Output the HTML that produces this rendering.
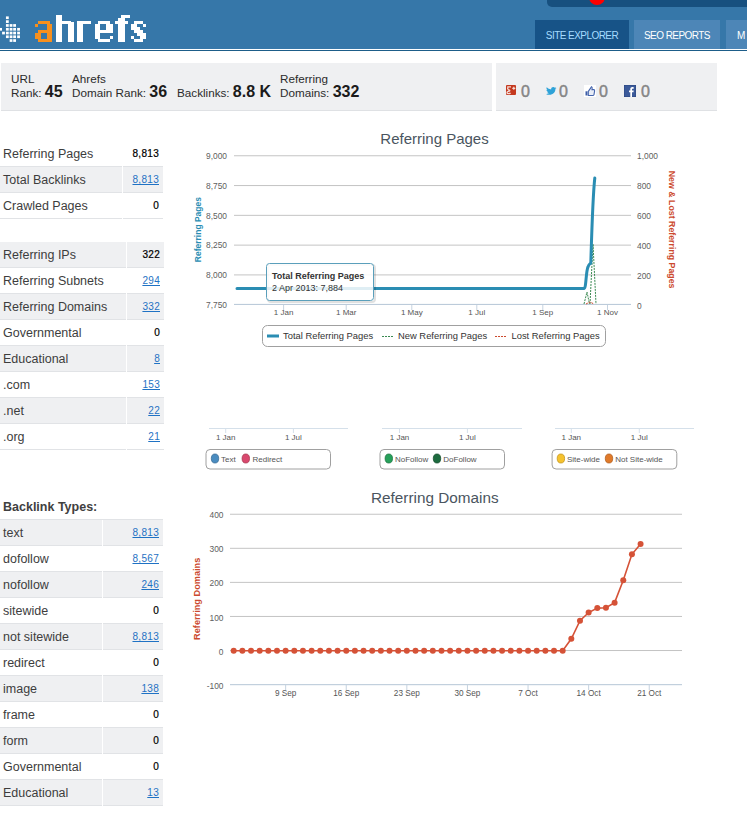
<!DOCTYPE html>
<html><head><meta charset="utf-8"><style>
html,body{margin:0;padding:0;background:#fff;width:747px;height:815px;overflow:hidden;position:relative;font-family:"Liberation Sans",sans-serif;}
.a{position:absolute;white-space:nowrap;}
#hdr{position:absolute;left:0;top:0;width:747px;height:49px;background:#3677a9;}
#hl1{position:absolute;left:0;top:49px;width:747px;height:1px;background:#fff;}
#hl2{position:absolute;left:0;top:50px;width:747px;height:1px;background:#1d5d89;}
.tab{position:absolute;top:20px;height:29px;font-size:10px;line-height:31px;letter-spacing:-0.55px;color:#fff;text-align:center;}
.stat{position:absolute;top:63px;height:47px;background:#eff0f2;border-bottom:1px solid #dfe1e4;}
.lbl{font-size:11.7px;color:#2b2b2b;line-height:13.6px;}
.num{font-size:16px;font-weight:bold;color:#1b1b1b;}
.row{position:absolute;left:0;height:25px;border-bottom:1px solid #e1e3e6;}
.g{background:#eff0f2;}
.rl{position:absolute;left:3px;top:1px;line-height:25px;font-size:12.5px;color:#3d3d3d;white-space:nowrap;}
.rv{position:absolute;right:4px;top:0px;line-height:25px;font-size:10px;letter-spacing:0.3px;color:#000;white-space:nowrap;}
.rv a{color:#1f72c4;text-decoration:underline;font-weight:normal;}
.rv b{font-weight:normal;-webkit-text-stroke:0.22px #000;}
.sep{position:absolute;top:0;width:1px;height:26px;background:#fff;}
</style></head><body>

<div id="hdr"></div><div id="hl1"></div><div id="hl2"></div>
<div class="a" style="left:547px;top:-5px;width:210px;height:12px;background:#17507f;border-radius:5px;"></div>
<div class="a" style="left:588.7px;top:-11.6px;width:16.6px;height:16.6px;background:#ff0000;border-radius:50%;"></div>
<div class="tab" style="left:535px;width:94px;background:#175387;color:#a6dcff;">SITE EXPLORER</div>
<div class="tab" style="left:634px;width:86px;background:#4d86b7;">SEO REPORTS</div>
<div class="tab" style="left:726px;width:40px;background:#4d86b7;text-align:left;"><span style="margin-left:11px">M</span></div>
<svg class="a" style="left:0;top:0" width="160" height="49"><rect x="5.95" y="16.4" width="2.8" height="2.7" fill="#fff"/><rect x="5.95" y="20.25" width="2.8" height="2.7" fill="#fff"/><rect x="5.95" y="24.1" width="2.8" height="2.7" fill="#fff"/><rect x="9.65" y="24.1" width="2.8" height="2.7" fill="#fff"/><rect x="13.2" y="24.1" width="2.8" height="2.7" fill="#fff"/><rect x="-0.8" y="27.95" width="2.8" height="2.7" fill="#fff"/><rect x="5.95" y="27.95" width="2.8" height="2.7" fill="#fff"/><rect x="9.65" y="27.95" width="2.8" height="2.7" fill="#fff"/><rect x="13.2" y="27.95" width="2.8" height="2.7" fill="#fff"/><rect x="17.15" y="27.95" width="2.8" height="2.7" fill="#fff"/><rect x="2.1" y="31.7" width="2.8" height="2.7" fill="#fff"/><rect x="5.95" y="31.7" width="2.8" height="2.7" fill="#fff"/><rect x="9.65" y="31.7" width="2.8" height="2.7" fill="#fff"/><rect x="13.2" y="31.7" width="2.8" height="2.7" fill="#fff"/><rect x="17.15" y="31.7" width="2.8" height="2.7" fill="#fff"/><rect x="5.95" y="35.4" width="2.8" height="2.7" fill="#fff"/><rect x="9.65" y="35.4" width="2.8" height="2.7" fill="#fff"/><rect x="13.2" y="35.4" width="2.8" height="2.7" fill="#fff"/><rect x="17.15" y="35.4" width="2.8" height="2.7" fill="#fff"/><rect x="9.65" y="39.2" width="2.8" height="2.7" fill="#fff"/><rect x="13.2" y="39.2" width="2.8" height="2.7" fill="#fff"/></svg>
<svg class="a" style="left:0;top:0" width="160" height="49" shape-rendering="crispEdges"><rect x="38.4" y="20.92" width="11.5" height="2.96" fill="#f7901e"/><rect x="35.0" y="23.88" width="3.4" height="2.96" fill="#f7901e"/><rect x="46.7" y="23.88" width="5.7" height="17.76" fill="#f7901e"/><rect x="38.4" y="29.8" width="8.3" height="2.96" fill="#f7901e"/><rect x="35.0" y="32.76" width="5.7" height="5.92" fill="#f7901e"/><rect x="38.4" y="38.68" width="8.3" height="2.96" fill="#f7901e"/><rect x="55.7" y="15.0" width="6.2" height="26.64" fill="#fff"/><rect x="61.9" y="20.92" width="8.6" height="2.96" fill="#fff"/><rect x="67.8" y="23.88" width="5.9" height="17.759999999999998" fill="#fff"/><rect x="70.5" y="22.42" width="3.2" height="1.5" fill="#fff"/><rect x="76.6" y="20.92" width="6.2" height="20.72" fill="#fff"/><rect x="82.8" y="20.92" width="8.3" height="2.96" fill="#fff"/><rect x="97.9" y="20.92" width="11.8" height="2.96" fill="#fff"/><rect x="94.6" y="23.88" width="5.6" height="14.8" fill="#fff"/><rect x="106.2" y="23.88" width="6.3" height="5.92" fill="#fff"/><rect x="100.2" y="29.8" width="12.3" height="2.96" fill="#fff"/><rect x="109.5" y="35.72" width="3.0" height="2.96" fill="#fff"/><rect x="97.9" y="38.68" width="11.8" height="2.96" fill="#fff"/><rect x="121.4" y="15.0" width="8.8" height="2.96" fill="#fff"/><rect x="118.2" y="17.96" width="6.4" height="23.68" fill="#fff"/><rect x="115.0" y="20.92" width="13.0" height="2.96" fill="#fff"/><rect x="134.0" y="20.92" width="9.0" height="2.96" fill="#fff"/><rect x="131.0" y="23.88" width="6.2" height="2.96" fill="#fff"/><rect x="143.0" y="23.88" width="3.0" height="2.96" fill="#fff"/><rect x="131.0" y="26.84" width="8.8" height="2.96" fill="#fff"/><rect x="134.0" y="29.8" width="9.0" height="2.96" fill="#fff"/><rect x="137.2" y="32.76" width="8.8" height="2.96" fill="#fff"/><rect x="131.0" y="35.72" width="3.0" height="2.96" fill="#fff"/><rect x="139.8" y="35.72" width="6.2" height="2.96" fill="#fff"/><rect x="134.0" y="38.68" width="9.0" height="2.96" fill="#fff"/></svg>
<div class="stat" style="left:1px;width:491px;"></div>
<div class="stat" style="left:496px;width:221px;"></div>
<div class="a lbl" style="left:11px;top:71.6px;">URL<br>Rank: <span class="num" style="position:relative;top:0px">45</span></div>
<div class="a lbl" style="left:72px;top:71.6px;">Ahrefs<br>Domain Rank: <span class="num" style="position:relative;top:0px">36</span></div>
<div class="a lbl" style="left:177px;top:85.2px;">Backlinks: <span class="num" style="position:relative;top:0px">8.8 K</span></div>
<div class="a lbl" style="left:280px;top:71.6px;">Referring<br>Domains: <span class="num" style="position:relative;top:0px">332</span></div>
<svg class="a" style="left:506px;top:85px" width="10" height="10"><rect width="10" height="10" rx="1" fill="#c4391f"/><path d="M1.2 1.8 H5 M2.6 1.8 Q0.8 3.2 2.4 4.6 Q4.2 5.2 3.6 6 Q0.6 6.6 1.2 8.2 Q2.6 9.2 4.6 8.2" fill="none" stroke="#f4dcd6" stroke-width="1.3"/><path d="M6.3 3.3 H9.3 M7.8 1.8 V4.8" stroke="#f4dcd6" stroke-width="1.2"/></svg>
<div class="a" style="left:521px;top:83px;font-size:16px;color:#858585;-webkit-text-stroke:0.45px #858585;">0</div>
<svg class="a" style="left:546px;top:87.3px" width="10.5" height="8" viewBox="0 0 24 20" preserveAspectRatio="none"><path d="M24 2.4c-.9.4-1.8.6-2.8.8 1-.6 1.8-1.6 2.2-2.7-1 .6-2 1-3.1 1.2C19.3.7 18 0 16.6 0c-2.7 0-4.9 2.2-4.9 4.9 0 .4 0 .8.1 1.1C7.7 5.8 4.1 3.9 1.7.9c-.4.7-.7 1.6-.7 2.5 0 1.7.9 3.2 2.2 4.1-.8 0-1.6-.2-2.2-.6v.1c0 2.4 1.7 4.4 3.9 4.8-.4.1-.8.2-1.3.2-.3 0-.6 0-.9-.1.6 2 2.4 3.4 4.6 3.4-1.7 1.3-3.8 2.1-6.1 2.1-.4 0-.8 0-1.2-.1 2.2 1.4 4.8 2.2 7.5 2.2 9.1 0 14-7.5 14-14v-.6c1-.7 1.8-1.6 2.5-2.5z" fill="#2ea2d8"/></svg>
<div class="a" style="left:559px;top:83px;font-size:16px;color:#858585;-webkit-text-stroke:0.45px #858585;">0</div>
<svg class="a" style="left:584px;top:85px" width="12" height="12"><rect width="12" height="12" fill="#fff"/><path d="M1.5 6.3h2v4.2h-2z" fill="#3d5ea8"/><path d="M4.3 6.3 L6.6 3.2 Q7 2 7.6 1.6 Q8.6 2.2 8 4.6 H9.9 Q10.8 4.9 10.6 5.9 L10 9.6 Q9.7 10.5 8.8 10.5 H4.3z" fill="#e8edf7" stroke="#4565ad" stroke-width="1.1"/></svg>
<div class="a" style="left:599px;top:83px;font-size:16px;color:#858585;-webkit-text-stroke:0.45px #858585;">0</div>
<svg class="a" style="left:624px;top:85px" width="12" height="12"><rect width="12" height="12" fill="#3b5a9a"/><rect x="0" y="0" width="12" height="12" fill="none" stroke="#2c4680" stroke-width="1"/><path d="M6.3 12V7.2H5v-1.8h1.3V4.3c0-1.4.8-2.2 2.1-2.2.6 0 1.1 0 1.3.1v1.5h-.9c-.7 0-.8.3-.8.8v.9h1.7l-.2 1.8H8v4.8z" fill="#fff"/></svg>
<div class="a" style="left:641px;top:83px;font-size:16px;color:#858585;-webkit-text-stroke:0.45px #858585;">0</div>
<div class="row" style="top:141px;width:163px;"><span class="rl">Referring Pages</span><span class="rv"><b>8,813</b></span><div class="sep" style="left:122px"></div></div>
<div class="row g" style="top:167px;width:163px;"><span class="rl">Total Backlinks</span><span class="rv"><a>8,813</a></span><div class="sep" style="left:122px"></div></div>
<div class="row" style="top:193px;width:163px;"><span class="rl">Crawled Pages</span><span class="rv"><b>0</b></span><div class="sep" style="left:122px"></div></div>
<div class="row g" style="top:242px;width:164px;"><span class="rl">Referring IPs</span><span class="rv"><b>322</b></span><div class="sep" style="left:126px"></div></div>
<div class="row" style="top:268px;width:164px;"><span class="rl">Referring Subnets</span><span class="rv"><a>294</a></span><div class="sep" style="left:126px"></div></div>
<div class="row g" style="top:294px;width:164px;"><span class="rl">Referring Domains</span><span class="rv"><a>332</a></span><div class="sep" style="left:126px"></div></div>
<div class="row" style="top:320px;width:164px;"><span class="rl">Governmental</span><span class="rv"><b>0</b></span><div class="sep" style="left:126px"></div></div>
<div class="row g" style="top:346px;width:164px;"><span class="rl">Educational</span><span class="rv"><a>8</a></span><div class="sep" style="left:126px"></div></div>
<div class="row" style="top:372px;width:164px;"><span class="rl">.com</span><span class="rv"><a>153</a></span><div class="sep" style="left:126px"></div></div>
<div class="row g" style="top:398px;width:164px;"><span class="rl">.net</span><span class="rv"><a>22</a></span><div class="sep" style="left:126px"></div></div>
<div class="row" style="top:424px;width:164px;"><span class="rl">.org</span><span class="rv"><a>21</a></span><div class="sep" style="left:126px"></div></div>
<div class="a" style="left:3px;top:500px;font-size:12.5px;font-weight:bold;color:#404040;">Backlink Types:</div>
<div class="a" style="left:0;top:519px;width:163px;height:1px;background:#e1e3e6"></div>
<div class="row g" style="top:520px;width:163px;"><span class="rl">text</span><span class="rv"><a>8,813</a></span><div class="sep" style="left:102px"></div></div>
<div class="row" style="top:546px;width:163px;"><span class="rl">dofollow</span><span class="rv"><a>8,567</a></span><div class="sep" style="left:102px"></div></div>
<div class="row g" style="top:572px;width:163px;"><span class="rl">nofollow</span><span class="rv"><a>246</a></span><div class="sep" style="left:102px"></div></div>
<div class="row" style="top:598px;width:163px;"><span class="rl">sitewide</span><span class="rv"><b>0</b></span><div class="sep" style="left:102px"></div></div>
<div class="row g" style="top:624px;width:163px;"><span class="rl">not sitewide</span><span class="rv"><a>8,813</a></span><div class="sep" style="left:102px"></div></div>
<div class="row" style="top:650px;width:163px;"><span class="rl">redirect</span><span class="rv"><b>0</b></span><div class="sep" style="left:102px"></div></div>
<div class="row g" style="top:676px;width:163px;"><span class="rl">image</span><span class="rv"><a>138</a></span><div class="sep" style="left:102px"></div></div>
<div class="row" style="top:702px;width:163px;"><span class="rl">frame</span><span class="rv"><b>0</b></span><div class="sep" style="left:102px"></div></div>
<div class="row g" style="top:728px;width:163px;"><span class="rl">form</span><span class="rv"><b>0</b></span><div class="sep" style="left:102px"></div></div>
<div class="row" style="top:754px;width:163px;"><span class="rl">Governmental</span><span class="rv"><b>0</b></span><div class="sep" style="left:102px"></div></div>
<div class="row g" style="top:780px;width:163px;"><span class="rl">Educational</span><span class="rv"><a>13</a></span><div class="sep" style="left:102px"></div></div>
<svg class="a" style="left:0;top:0" width="747" height="815" font-family="Liberation Sans"><text x="434.5" y="144" font-size="15" fill="#4a5560" text-anchor="middle">Referring Pages</text><rect x="234" y="155.26" width="397" height="1" fill="#c4c4c4"/><text x="227" y="158.90" font-size="8.4" fill="#606060" text-anchor="end">9,000</text><text x="637" y="158.90" font-size="8.4" fill="#606060">1,000</text><rect x="234" y="185.05" width="397" height="1" fill="#c4c4c4"/><text x="227" y="188.75" font-size="8.4" fill="#606060" text-anchor="end">8,750</text><text x="637" y="188.80" font-size="8.4" fill="#606060">800</text><rect x="234" y="214.84" width="397" height="1" fill="#c4c4c4"/><text x="227" y="218.60" font-size="8.4" fill="#606060" text-anchor="end">8,500</text><text x="637" y="218.70" font-size="8.4" fill="#606060">600</text><rect x="234" y="244.63" width="397" height="1" fill="#c4c4c4"/><text x="227" y="248.45" font-size="8.4" fill="#606060" text-anchor="end">8,250</text><text x="637" y="248.60" font-size="8.4" fill="#606060">400</text><rect x="234" y="274.41" width="397" height="1" fill="#c4c4c4"/><text x="227" y="278.30" font-size="8.4" fill="#606060" text-anchor="end">8,000</text><text x="637" y="278.50" font-size="8.4" fill="#606060">200</text><rect x="234" y="303.9" width="397" height="1.1" fill="#bccbda"/><text x="227" y="308.2" font-size="8.4" fill="#606060" text-anchor="end">7,750</text><text x="637" y="308.6" font-size="8.4" fill="#606060">0</text><rect x="283.1" y="305" width="1" height="5" fill="#c6d3e0"/><text x="283.6" y="315" font-size="8" fill="#555" text-anchor="middle">1 Jan</text><rect x="345.7" y="305" width="1" height="5" fill="#c6d3e0"/><text x="346.2" y="315" font-size="8" fill="#555" text-anchor="middle">1 Mar</text><rect x="411.3" y="305" width="1" height="5" fill="#c6d3e0"/><text x="411.8" y="315" font-size="8" fill="#555" text-anchor="middle">1 May</text><rect x="476.3" y="305" width="1" height="5" fill="#c6d3e0"/><text x="476.8" y="315" font-size="8" fill="#555" text-anchor="middle">1 Jul</text><rect x="542.3" y="305" width="1" height="5" fill="#c6d3e0"/><text x="542.8" y="315" font-size="8" fill="#555" text-anchor="middle">1 Sep</text><rect x="607.0" y="305" width="1" height="5" fill="#c6d3e0"/><text x="607.5" y="315" font-size="8" fill="#555" text-anchor="middle">1 Nov</text><text transform="translate(201,229.6) rotate(-90)" font-size="8.5" font-weight="bold" fill="#2a8db3" text-anchor="middle">Referring Pages</text><text transform="translate(668.7,229.6) rotate(90)" font-size="8.8" font-weight="bold" fill="#cc4a2e" text-anchor="middle">New &amp; Lost Referring Pages</text><path d="M584 304 L587 292 L589.5 304 M590 304 L593 244 L596 304" fill="none" stroke="#3a8a52" stroke-width="1" stroke-dasharray="2,1"/><path d="M586 304 L590 302 L594 304" fill="none" stroke="#cc4a2e" stroke-width="1" stroke-dasharray="2,1"/><path d="M237 288.5 L584.3 288.5 C586 288.5 586 271 588 267 C589 264 590 264 590.8 263 C591.5 240 592.8 195 594.8 178" fill="none" stroke="#2a8db3" stroke-width="3" stroke-linejoin="round" stroke-linecap="round"/><rect x="268" y="265" width="107" height="37" rx="3" fill="none" stroke="#000" stroke-opacity="0.12" stroke-width="2"/><rect x="266.5" y="263.5" width="107" height="37" rx="3" fill="#fff" fill-opacity="0.85" stroke="#5a9fbb" stroke-width="1"/><text x="272" y="279" font-size="9" font-weight="bold" fill="#333">Total Referring Pages</text><text x="272" y="291" font-size="9" fill="#333">2 Apr 2013: 7,884</text><rect x="262.5" y="325.5" width="343" height="21" rx="5" fill="#fff" stroke="#a0a0a0" stroke-width="1"/><rect x="267" y="334.5" width="12" height="3" fill="#2a8db3"/><text x="283" y="339" font-size="9.4" fill="#333">Total Referring Pages</text><path d="M382 336.5 H394" stroke="#3a8a52" stroke-width="1" stroke-dasharray="2,1"/><text x="398" y="339" font-size="9.4" fill="#333">New Referring Pages</text><path d="M495 336.5 H507" stroke="#cc4a2e" stroke-width="1" stroke-dasharray="2,1"/><text x="511.5" y="339" font-size="9.4" fill="#333">Lost Referring Pages</text><rect x="209" y="428" width="139" height="1" fill="#d5e0ea"/><rect x="225.2" y="429" width="1" height="4" fill="#d5e0ea"/><text x="225.7" y="440" font-size="8" fill="#555" text-anchor="middle">1 Jan</text><rect x="292.9" y="429" width="1" height="4" fill="#d5e0ea"/><text x="293.4" y="440" font-size="8" fill="#555" text-anchor="middle">1 Jul</text><rect x="206.0" y="449.5" width="124.5" height="19.5" rx="4" fill="#fff" stroke="#a0a0a0" stroke-width="1"/><ellipse cx="215" cy="458.5" rx="3.7" ry="4.5" fill="#4a8cc0" stroke="#3a6c95" stroke-width="0.8"/><text x="221" y="462" font-size="8" fill="#555">Text</text><ellipse cx="245.8" cy="458.5" rx="3.7" ry="4.5" fill="#d9486e" stroke="#a8364f" stroke-width="0.8"/><text x="252.5" y="462" font-size="8" fill="#555">Redirect</text><rect x="382" y="428" width="140" height="1" fill="#d5e0ea"/><rect x="399.0" y="429" width="1" height="4" fill="#d5e0ea"/><text x="399.5" y="440" font-size="8" fill="#555" text-anchor="middle">1 Jan</text><rect x="466.9" y="429" width="1" height="4" fill="#d5e0ea"/><text x="467.4" y="440" font-size="8" fill="#555" text-anchor="middle">1 Jul</text><rect x="380.0" y="449.5" width="124.5" height="19.5" rx="4" fill="#fff" stroke="#a0a0a0" stroke-width="1"/><ellipse cx="388.8" cy="458.5" rx="3.7" ry="4.5" fill="#26a05a" stroke="#1c7541" stroke-width="0.8"/><text x="395" y="462" font-size="8" fill="#555">NoFollow</text><ellipse cx="437" cy="458.5" rx="3.7" ry="4.5" fill="#1d6b3f" stroke="#144d2c" stroke-width="0.8"/><text x="443.3" y="462" font-size="8" fill="#555">DoFollow</text><rect x="555" y="428" width="139" height="1" fill="#d5e0ea"/><rect x="570.8" y="429" width="1" height="4" fill="#d5e0ea"/><text x="571.3" y="440" font-size="8" fill="#555" text-anchor="middle">1 Jan</text><rect x="638.8" y="429" width="1" height="4" fill="#d5e0ea"/><text x="639.3" y="440" font-size="8" fill="#555" text-anchor="middle">1 Jul</text><rect x="552.1" y="449.5" width="124.69999999999993" height="19.5" rx="4" fill="#fff" stroke="#a0a0a0" stroke-width="1"/><ellipse cx="560.9" cy="458.5" rx="3.7" ry="4.5" fill="#f5c22e" stroke="#c4961d" stroke-width="0.8"/><text x="567" y="462" font-size="8" fill="#555">Site-wide</text><ellipse cx="609" cy="458.5" rx="3.7" ry="4.5" fill="#e07a2a" stroke="#b05e1e" stroke-width="0.8"/><text x="615.2" y="462" font-size="8" fill="#555">Not Site-wide</text><text x="434.8" y="503" font-size="15.3" fill="#4a5560" text-anchor="middle">Referring Domains</text><rect x="230" y="513.74" width="452" height="1" fill="#c4c4c4"/><text x="223.5" y="517.70" font-size="8.4" fill="#606060" text-anchor="end">400</text><rect x="230" y="547.81" width="452" height="1" fill="#c4c4c4"/><text x="223.5" y="552.00" font-size="8.4" fill="#606060" text-anchor="end">300</text><rect x="230" y="581.88" width="452" height="1" fill="#c4c4c4"/><text x="223.5" y="586.30" font-size="8.4" fill="#606060" text-anchor="end">200</text><rect x="230" y="615.95" width="452" height="1" fill="#c4c4c4"/><text x="223.5" y="620.60" font-size="8.4" fill="#606060" text-anchor="end">100</text><rect x="230" y="650.02" width="452" height="1" fill="#c4c4c4"/><text x="223.5" y="654.90" font-size="8.4" fill="#606060" text-anchor="end">0</text><rect x="230" y="684.1" width="452" height="1.1" fill="#bccbda"/><text x="223.5" y="689.2" font-size="8.4" fill="#606060" text-anchor="end">-100</text><rect x="285.142" y="685" width="1" height="5" fill="#c6d3e0"/><text x="285.642" y="696" font-size="8.2" fill="#555" text-anchor="middle">9 Sep</text><rect x="345.741" y="685" width="1" height="5" fill="#c6d3e0"/><text x="346.241" y="696" font-size="8.2" fill="#555" text-anchor="middle">16 Sep</text><rect x="406.34" y="685" width="1" height="5" fill="#c6d3e0"/><text x="406.84" y="696" font-size="8.2" fill="#555" text-anchor="middle">23 Sep</text><rect x="466.93899999999996" y="685" width="1" height="5" fill="#c6d3e0"/><text x="467.43899999999996" y="696" font-size="8.2" fill="#555" text-anchor="middle">30 Sep</text><rect x="527.538" y="685" width="1" height="5" fill="#c6d3e0"/><text x="528.038" y="696" font-size="8.2" fill="#555" text-anchor="middle">7 Oct</text><rect x="588.137" y="685" width="1" height="5" fill="#c6d3e0"/><text x="588.637" y="696" font-size="8.2" fill="#555" text-anchor="middle">14 Oct</text><rect x="648.736" y="685" width="1" height="5" fill="#c6d3e0"/><text x="649.236" y="696" font-size="8.2" fill="#555" text-anchor="middle">21 Oct</text><text transform="translate(200,598.8) rotate(-90)" font-size="9.2" font-weight="bold" fill="#cc4a2e" text-anchor="middle">Referring Domains</text><path d="M233.70 650.70 L242.36 650.70 L251.01 650.70 L259.67 650.70 L268.33 650.70 L276.99 650.70 L285.64 650.70 L294.30 650.70 L302.96 650.70 L311.61 650.70 L320.27 650.70 L328.93 650.70 L337.58 650.70 L346.24 650.70 L354.90 650.70 L363.55 650.70 L372.21 650.70 L380.87 650.70 L389.53 650.70 L398.18 650.70 L406.84 650.70 L415.50 650.70 L424.15 650.70 L432.81 650.70 L441.47 650.70 L450.12 650.70 L458.78 650.70 L467.44 650.70 L476.10 650.70 L484.75 650.70 L493.41 650.70 L502.07 650.70 L510.72 650.70 L519.38 650.70 L528.04 650.70 L536.69 650.70 L545.35 650.70 L554.01 650.70 L562.67 650.70 L571.32 638.78 L579.98 620.72 L588.64 612.54 L597.29 608.11 L605.95 607.77 L614.61 602.66 L623.26 580.18 L631.92 554.28 L640.58 544.06" fill="none" stroke="#d55237" stroke-width="1.6"/><circle cx="233.70" cy="650.70" r="3" fill="#d55237"/><circle cx="242.36" cy="650.70" r="3" fill="#d55237"/><circle cx="251.01" cy="650.70" r="3" fill="#d55237"/><circle cx="259.67" cy="650.70" r="3" fill="#d55237"/><circle cx="268.33" cy="650.70" r="3" fill="#d55237"/><circle cx="276.99" cy="650.70" r="3" fill="#d55237"/><circle cx="285.64" cy="650.70" r="3" fill="#d55237"/><circle cx="294.30" cy="650.70" r="3" fill="#d55237"/><circle cx="302.96" cy="650.70" r="3" fill="#d55237"/><circle cx="311.61" cy="650.70" r="3" fill="#d55237"/><circle cx="320.27" cy="650.70" r="3" fill="#d55237"/><circle cx="328.93" cy="650.70" r="3" fill="#d55237"/><circle cx="337.58" cy="650.70" r="3" fill="#d55237"/><circle cx="346.24" cy="650.70" r="3" fill="#d55237"/><circle cx="354.90" cy="650.70" r="3" fill="#d55237"/><circle cx="363.55" cy="650.70" r="3" fill="#d55237"/><circle cx="372.21" cy="650.70" r="3" fill="#d55237"/><circle cx="380.87" cy="650.70" r="3" fill="#d55237"/><circle cx="389.53" cy="650.70" r="3" fill="#d55237"/><circle cx="398.18" cy="650.70" r="3" fill="#d55237"/><circle cx="406.84" cy="650.70" r="3" fill="#d55237"/><circle cx="415.50" cy="650.70" r="3" fill="#d55237"/><circle cx="424.15" cy="650.70" r="3" fill="#d55237"/><circle cx="432.81" cy="650.70" r="3" fill="#d55237"/><circle cx="441.47" cy="650.70" r="3" fill="#d55237"/><circle cx="450.12" cy="650.70" r="3" fill="#d55237"/><circle cx="458.78" cy="650.70" r="3" fill="#d55237"/><circle cx="467.44" cy="650.70" r="3" fill="#d55237"/><circle cx="476.10" cy="650.70" r="3" fill="#d55237"/><circle cx="484.75" cy="650.70" r="3" fill="#d55237"/><circle cx="493.41" cy="650.70" r="3" fill="#d55237"/><circle cx="502.07" cy="650.70" r="3" fill="#d55237"/><circle cx="510.72" cy="650.70" r="3" fill="#d55237"/><circle cx="519.38" cy="650.70" r="3" fill="#d55237"/><circle cx="528.04" cy="650.70" r="3" fill="#d55237"/><circle cx="536.69" cy="650.70" r="3" fill="#d55237"/><circle cx="545.35" cy="650.70" r="3" fill="#d55237"/><circle cx="554.01" cy="650.70" r="3" fill="#d55237"/><circle cx="562.67" cy="650.70" r="3" fill="#d55237"/><circle cx="571.32" cy="638.78" r="3" fill="#d55237"/><circle cx="579.98" cy="620.72" r="3" fill="#d55237"/><circle cx="588.64" cy="612.54" r="3" fill="#d55237"/><circle cx="597.29" cy="608.11" r="3" fill="#d55237"/><circle cx="605.95" cy="607.77" r="3" fill="#d55237"/><circle cx="614.61" cy="602.66" r="3" fill="#d55237"/><circle cx="623.26" cy="580.18" r="3" fill="#d55237"/><circle cx="631.92" cy="554.28" r="3" fill="#d55237"/><circle cx="640.58" cy="544.06" r="3" fill="#d55237"/></svg>
</body></html>
